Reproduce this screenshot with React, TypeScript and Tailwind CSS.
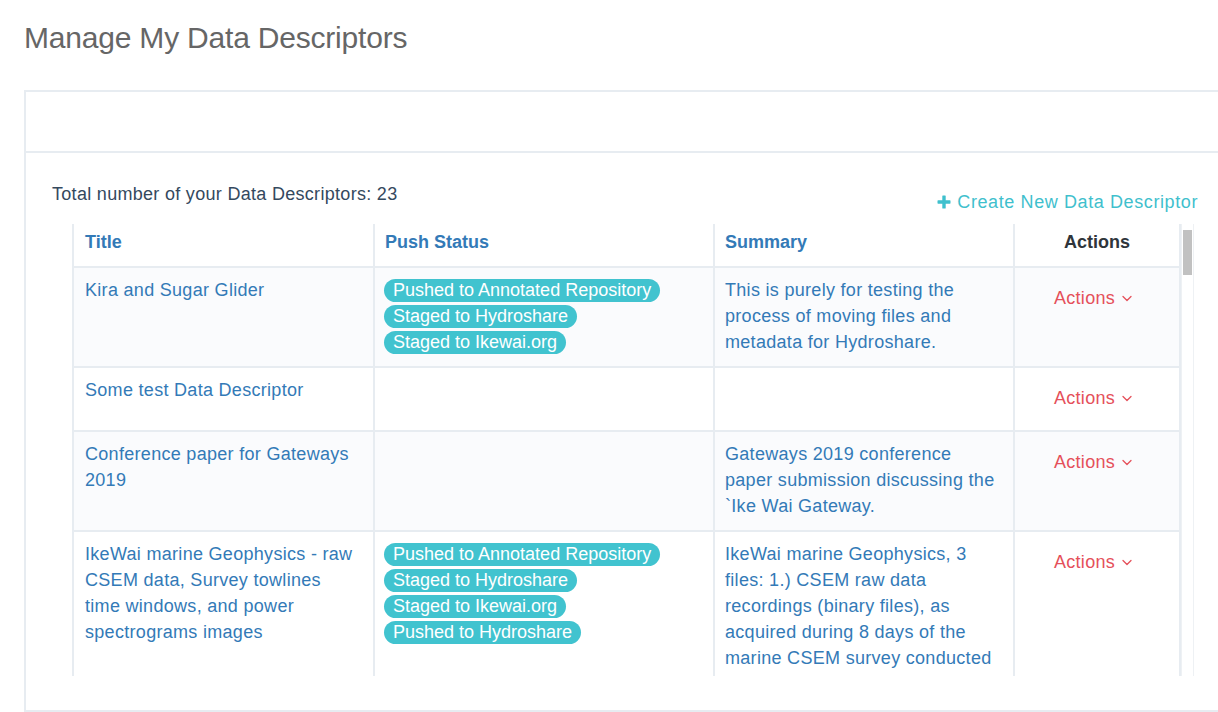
import React from "react";

const FONT = { fontFamily: '"Liberation Sans", Arial, sans-serif' };

function Badge({ children }: { children: React.ReactNode }) {
  return (
    <div className="h-[26px] flex items-center">
      <span className="inline-flex items-center h-[23px] rounded-full bg-[#41c3cf] px-[9px] text-white text-[18px] leading-[23px] whitespace-nowrap">
        {children}
      </span>
    </div>
  );
}

function ActionsBtn() {
  return (
    <div className="flex items-center justify-center pr-[8px] text-[#e5505a] text-[18px] leading-[26px] tracking-[0.3px]">
      <span>Actions</span>
      <svg className="ml-[7px] mt-[1px]" width="10" height="7" viewBox="0 0 10 7" fill="none">
        <path d="M1 1.5 L5 5.5 L9 1.5" stroke="#e5505a" strokeWidth="1.3" strokeLinecap="round" strokeLinejoin="round" />
      </svg>
    </div>
  );
}

type Row = {
  title: string[];
  badges: string[];
  summary: string[];
  striped: boolean;
};

const rows: Row[] = [
  {
    title: ["Kira and Sugar Glider"],
    badges: ["Pushed to Annotated Repository", "Staged to Hydroshare", "Staged to Ikewai.org"],
    summary: ["This is purely for testing the", "process of moving files and", "metadata for Hydroshare."],
    striped: true,
  },
  {
    title: ["Some test Data Descriptor"],
    badges: [],
    summary: [],
    striped: false,
  },
  {
    title: ["Conference paper for Gateways", "2019"],
    badges: [],
    summary: ["Gateways 2019 conference", "paper submission discussing the", "`Ike Wai Gateway."],
    striped: true,
  },
  {
    title: ["IkeWai marine Geophysics - raw", "CSEM data, Survey towlines", "time windows, and power", "spectrograms images"],
    badges: ["Pushed to Annotated Repository", "Staged to Hydroshare", "Staged to Ikewai.org", "Pushed to Hydroshare"],
    summary: [
      "IkeWai marine Geophysics, 3",
      "files: 1.) CSEM raw data",
      "recordings (binary files), as",
      "acquired during 8 days of the",
      "marine CSEM survey conducted",
    ],
    striped: false,
  },
];

function Lines({ lines }: { lines: string[] }) {
  return (
    <>
      {lines.map((l, i) => (
        <div key={i} className="whitespace-nowrap">
          {l}
        </div>
      ))}
    </>
  );
}

export default function App() {
  const cellBase = "border-t-2 border-l-2 border-[#e7ecf1] pt-[9px] pb-[11px] text-[18px] leading-[26px] tracking-[0.3px] overflow-hidden";
  const headBase = "border-l-2 border-[#e7ecf1] pt-[5px] h-[42px] text-[18px] leading-[26px] font-bold";
  return (
    <div className="w-[1218px] h-[712px] overflow-hidden bg-white" style={FONT}>
      <div className="pl-[24px]">
        <h1 className="pt-[18px] h-[90px] text-[30px] leading-[40px] text-[#666666] font-normal tracking-[-0.2px]">
          Manage My Data Descriptors
        </h1>
        <div className="w-[1202px] h-[622px] border-2 border-[#e7ecf1] flex flex-col">
          <div className="h-[61px] border-b-2 border-[#e7ecf1] flex-none" />
          <div className="pl-[26px] pt-[28px] pr-[26px] flex-1 overflow-hidden">
            <div className="flex justify-between items-start">
              <div className="text-[18px] leading-[26px] text-[#34495e] tracking-[0.3px]">Total number of your Data Descriptors: 23</div>
              <div className="pt-[8px] flex items-center text-[18px] leading-[26px] text-[#3fc0cd] tracking-[0.6px]">
                <svg width="14" height="14" viewBox="0 0 14 14" className="mr-[6px]">
                  <rect x="5.3" y="0.5" width="3.4" height="13" rx="0.6" fill="#3fc0cd" />
                  <rect x="0.5" y="5.3" width="13" height="3.4" rx="0.6" fill="#3fc0cd" />
                </svg>
                <span>Create New Data Descriptor</span>
              </div>
            </div>
            <div className="mt-[9px] ml-[20px] h-[452px] overflow-hidden flex">
              <div className="flex-none grid grid-cols-[301px_340px_300px_168px] content-start">
                <div className={`${headBase} pl-[11px] text-[#337ab7]`}>Title</div>
                <div className={`${headBase} pl-[10px] text-[#337ab7]`}>Push Status</div>
                <div className={`${headBase} pl-[10px] text-[#337ab7]`}>Summary</div>
                <div className={`${headBase} border-r-2 text-[#2f353b] text-center`}>Actions</div>
                {rows.map((r, i) => {
                  const bg = r.striped ? "bg-[#fafbfd]" : "bg-white";
                  return (
                    <React.Fragment key={i}>
                      <div className={`${cellBase} ${bg} pl-[11px] pr-[8px] text-[#337ab7]`}>
                        <Lines lines={r.title} />
                      </div>
                      <div className={`${cellBase} ${bg} pl-[9px] pr-[10px] tracking-normal`}>
                        {r.badges.map((b) => (
                          <Badge key={b}>{b}</Badge>
                        ))}
                      </div>
                      <div className={`${cellBase} ${bg} pl-[10px] pr-[8px] text-[#337ab7]`}>
                        <Lines lines={r.summary} />
                      </div>
                      <div className={`border-t-2 border-l-2 border-r-2 border-[#e7ecf1] ${bg} pt-[17px] pb-[19px]`}>
                        <ActionsBtn />
                      </div>
                    </React.Fragment>
                  );
                })}
              </div>
              <div className="flex-none w-[13px] h-full border-l border-r border-[#eef1f4] bg-white pt-[6px] px-[1px]">
                <div className="h-[45px] bg-[#c1c1c1]" />
              </div>
            </div>
          </div>
        </div>
      </div>
    </div>
  );
}
